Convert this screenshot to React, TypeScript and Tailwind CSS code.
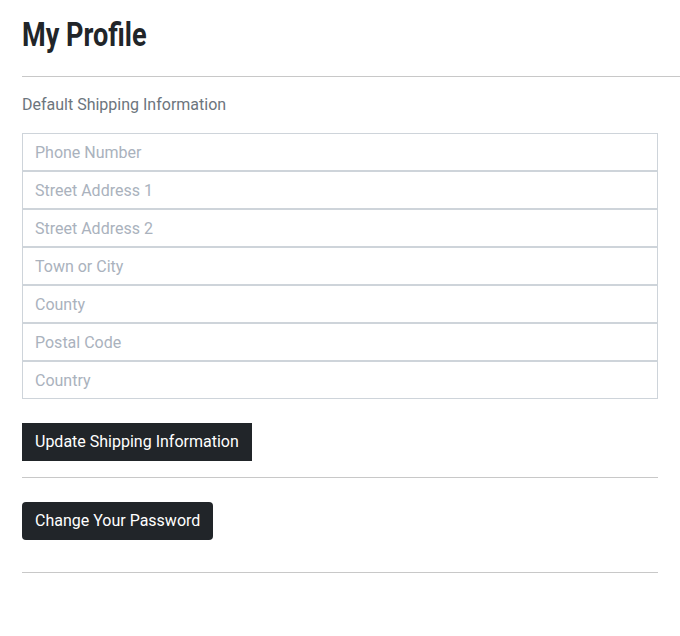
const fields = [
  "Phone Number",
  "Street Address 1",
  "Street Address 2",
  "Town or City",
  "County",
  "Postal Code",
  "Country",
];

export default function App() {
  return (
    <div className="min-h-screen bg-white pl-[22px] font-['Roboto',sans-serif] text-[#212529]">
      <h1 className="pt-[13px] pb-[19px] text-[33px] font-bold leading-[44px] text-[#212529]">
        <span className="inline-block origin-left scale-x-[0.82] font-['Roboto',sans-serif]">
          My Profile
        </span>
      </h1>
      <hr className="border-t border-[#c8c8c8]" />
      <div className="pr-[22px]">
        <p className="mt-[16px] text-[16px] leading-[24px] text-[#6c757d]">
          Default Shipping Information
        </p>
        <form className="mt-[16px] flex flex-col">
          {fields.map((f) => (
            <input
              key={f}
              type="text"
              placeholder={f}
              className="h-[38px] w-full border border-[#ced4da] bg-white px-[12px] text-[16px] outline-none placeholder:text-[#aab2bd]"
            />
          ))}
          <div className="mt-[24px]">
            <button
              type="button"
              className="h-[38px] bg-[#212529] px-[13px] text-[16px] text-white"
            >
              Update Shipping Information
            </button>
          </div>
        </form>
        <hr className="mt-[16px] border-t border-[#c8c8c8]" />
        <button
          type="button"
          className="mt-[24px] h-[38px] rounded-[4px] bg-[#212529] px-[13px] text-[16px] text-white"
        >
          Change Your Password
        </button>
        <hr className="mt-[32px] border-t border-[#c8c8c8]" />
      </div>
    </div>
  );
}
